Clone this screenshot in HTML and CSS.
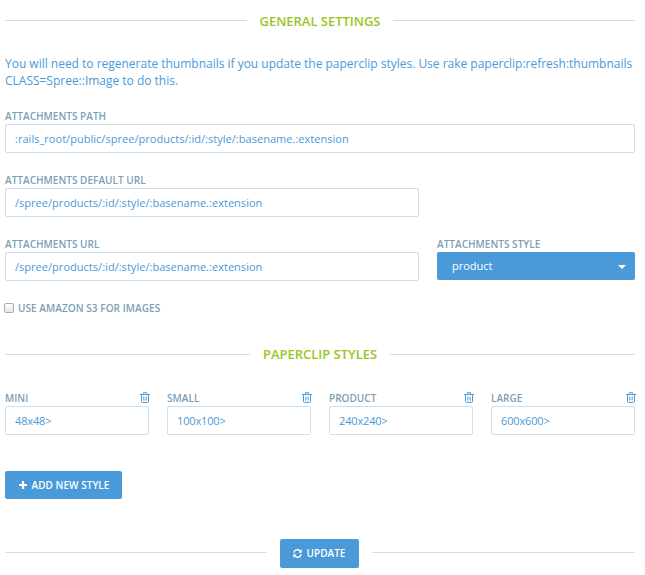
FILE: index.html
```html
<!DOCTYPE html>
<html lang="en">
<head>
<meta charset="utf-8">
<title>Image Settings</title>
<link rel="stylesheet" href="styles.css">
</head>
<body>
<svg class="sprite" aria-hidden="true">
  <symbol id="trash" viewBox="0 0 10 11">
    <path d="M0 2.5h10M3 2.2l.6-1.6h2.8L7 2.2M1.5 2.5v7q0 .9.9.9h5.2q.9 0 .9-.9v-7" fill="none" stroke="currentColor" stroke-width="1"/>
    <path d="M3.5 4.5v4M5 4.5v4M6.5 4.5v4" fill="none" stroke="currentColor" stroke-width=".7"/>
  </symbol>
</svg>
<form class="settings">
  <h2 class="legend"><span>GENERAL SETTINGS</span></h2>
  <p class="notice">You will need to regenerate thumbnails if you update the paperclip styles. Use rake paperclip:refresh:thumbnails<br>CLASS=Spree::Image to do this.</p>

  <div class="field">
    <label for="path"><span>ATTACHMENTS PATH</span></label>
    <input id="path" type="text" value=":rails_root/public/spree/products/:id/:style/:basename.:extension">
  </div>
  <div class="field field-url">
    <label for="default-url"><span>ATTACHMENTS DEFAULT URL</span></label>
    <input id="default-url" type="text" value="/spree/products/:id/:style/:basename.:extension">
  </div>
  <div class="row">
    <div class="field field-url">
      <label for="url"><span>ATTACHMENTS URL</span></label>
      <input id="url" type="text" value="/spree/products/:id/:style/:basename.:extension">
    </div>
    <div class="field field-style">
      <label><span>ATTACHMENTS STYLE</span></label>
      <div class="select"><span>product</span><i class="caret"></i></div>
    </div>
  </div>
  <label class="check"><input type="checkbox"><span>USE AMAZON S3 FOR IMAGES</span></label>

  <h2 class="legend legend-styles"><span>PAPERCLIP STYLES</span></h2>
  <div class="styles">
    <div class="field">
      <label for="mini"><span>MINI</span><svg class="trash"><use href="#trash"/></svg></label>
      <input id="mini" type="text" value="48x48&gt;">
    </div>
    <div class="field">
      <label for="small"><span>SMALL</span><svg class="trash"><use href="#trash"/></svg></label>
      <input id="small" type="text" value="100x100&gt;">
    </div>
    <div class="field">
      <label for="product"><span>PRODUCT</span><svg class="trash"><use href="#trash"/></svg></label>
      <input id="product" type="text" value="240x240&gt;">
    </div>
    <div class="field">
      <label for="large"><span>LARGE</span><svg class="trash"><use href="#trash"/></svg></label>
      <input id="large" type="text" value="600x600&gt;">
    </div>
  </div>
  <button class="button add" type="button">
    <svg class="plus" viewBox="0 0 8 8"><path d="M4 0v8M0 4h8" stroke="currentColor" stroke-width="2.2"/></svg>
    <span>ADD NEW STYLE</span>
  </button>
  <div class="actions">
    <button class="button update" type="button">
      <svg class="refresh" viewBox="0 0 9 9"><path d="M.8 3.9A3.7 3.7 0 0 1 7.2 2M8.2 5.1A3.7 3.7 0 0 1 1.8 7" fill="none" stroke="currentColor" stroke-width="1.4"/><path d="M8.8.3v3.5H5.3zM.2 8.7V5.2h3.5z" fill="currentColor"/></svg>
      <span>UPDATE</span>
    </button>
  </div>
</form>
</body>
</html>
```
FILE: styles.css
```css
* { box-sizing: border-box; }
body {
  margin: 0;
  background: #fff;
  color: #4a9ad9;
  font-family: "Open Sans", sans-serif;
  font-size: 13px;
}
.sprite { display: none; }
.settings { width: 630px; margin-left: 5px; padding-top: 11px; }
.legend, .actions { display: flex; align-items: center; }
.legend {
  gap: 13px;
  height: 20px;
  margin: 0;
  color: #98c61f;
  font-size: 13px;
  font-weight: 600;
  letter-spacing: -.02px;
  line-height: 20px;
  white-space: nowrap;
}
.legend::before, .legend::after, .actions::before, .actions::after {
  content: "";
  flex: 1;
  height: 1px;
  background: #c7e0f4;
}
.legend::before, .legend::after { margin-bottom: 1px; }
.legend-styles { margin-top: 30px; line-height: 19px; }
.legend-styles::before, .legend-styles::after { margin: 1px 0 0; }
.notice { margin: 24px 0 20px; font-size: 12px; line-height: 17px; letter-spacing: -.01px; white-space: nowrap; }
.field { margin-bottom: 20px; }
.field label {
  display: flex;
  justify-content: space-between;
  height: 15px;
  line-height: 14px;
}
.field label, .check { color: #7c9eb6; font-size: 10px; font-weight: 600; letter-spacing: .03px; }
.check { letter-spacing: .06px; }
input[type="text"] {
  display: block;
  width: 100%;
  height: 29px;
  padding: 0 9px;
  border: 1px solid #c7e0f4;
  border-radius: 2px;
  background: #fff;
  color: #4a9ad9;
  font: 11px "Open Sans", sans-serif;
  letter-spacing: .03px;
}
.styles input[type="text"] { letter-spacing: -.15px; }
.field-url { width: 414px; }
.field-style { width: 198px; }
.row { display: flex; justify-content: space-between; }
.select {
  display: flex;
  align-items: center;
  justify-content: space-between;
  height: 28px;
  padding: 0 9px 1px 15px;
  border-radius: 2px;
  background: #4a9ad9;
  color: #fff;
  font-size: 11px;
}
.caret { border: 4px solid transparent; border-top-color: #fff; border-bottom: 0; margin-top: 3px; }
.check { display: flex; align-items: center; height: 12px; gap: 4px; margin-top: 1px; line-height: 12px; }
.check span { margin-top: -1px; }
.check input {
  appearance: none;
  width: 10px;
  height: 10px;
  margin: 0 0 0 -1px;
  border: 1px solid #aaa;
  border-radius: 2px;
  background: linear-gradient(#fff, #e6e6e6);
}
.styles { display: grid; grid-template-columns: repeat(4, 144px); gap: 18px; margin-top: 27px; }
.styles .field { margin: 0; }
.trash { width: 10px; height: 11px; margin: 1px -.5px 0 0; color: #4a9ad9; }
.button {
  display: flex;
  align-items: center;
  justify-content: center;
  padding: 0;
  border: 0;
  border-radius: 2px;
  background: #4a9ad9;
  color: #fff;
  font: 600 10px "Open Sans", sans-serif;
  letter-spacing: .04px;
}
.add { width: 117px; height: 28px; gap: 5px; margin-top: 36px; padding-left: 1px; }
.plus { width: 8px; height: 8px; }
.actions { height: 29px; gap: 13px; margin-top: 40px; }
.actions::before { flex: 0 0 262px; }
.actions::before, .actions::after { margin-bottom: 2px; }
.update { width: 79px; height: 29px; gap: 5px; padding: 0 1px 1px 0; }
.refresh { width: 9px; height: 9px; }
```
